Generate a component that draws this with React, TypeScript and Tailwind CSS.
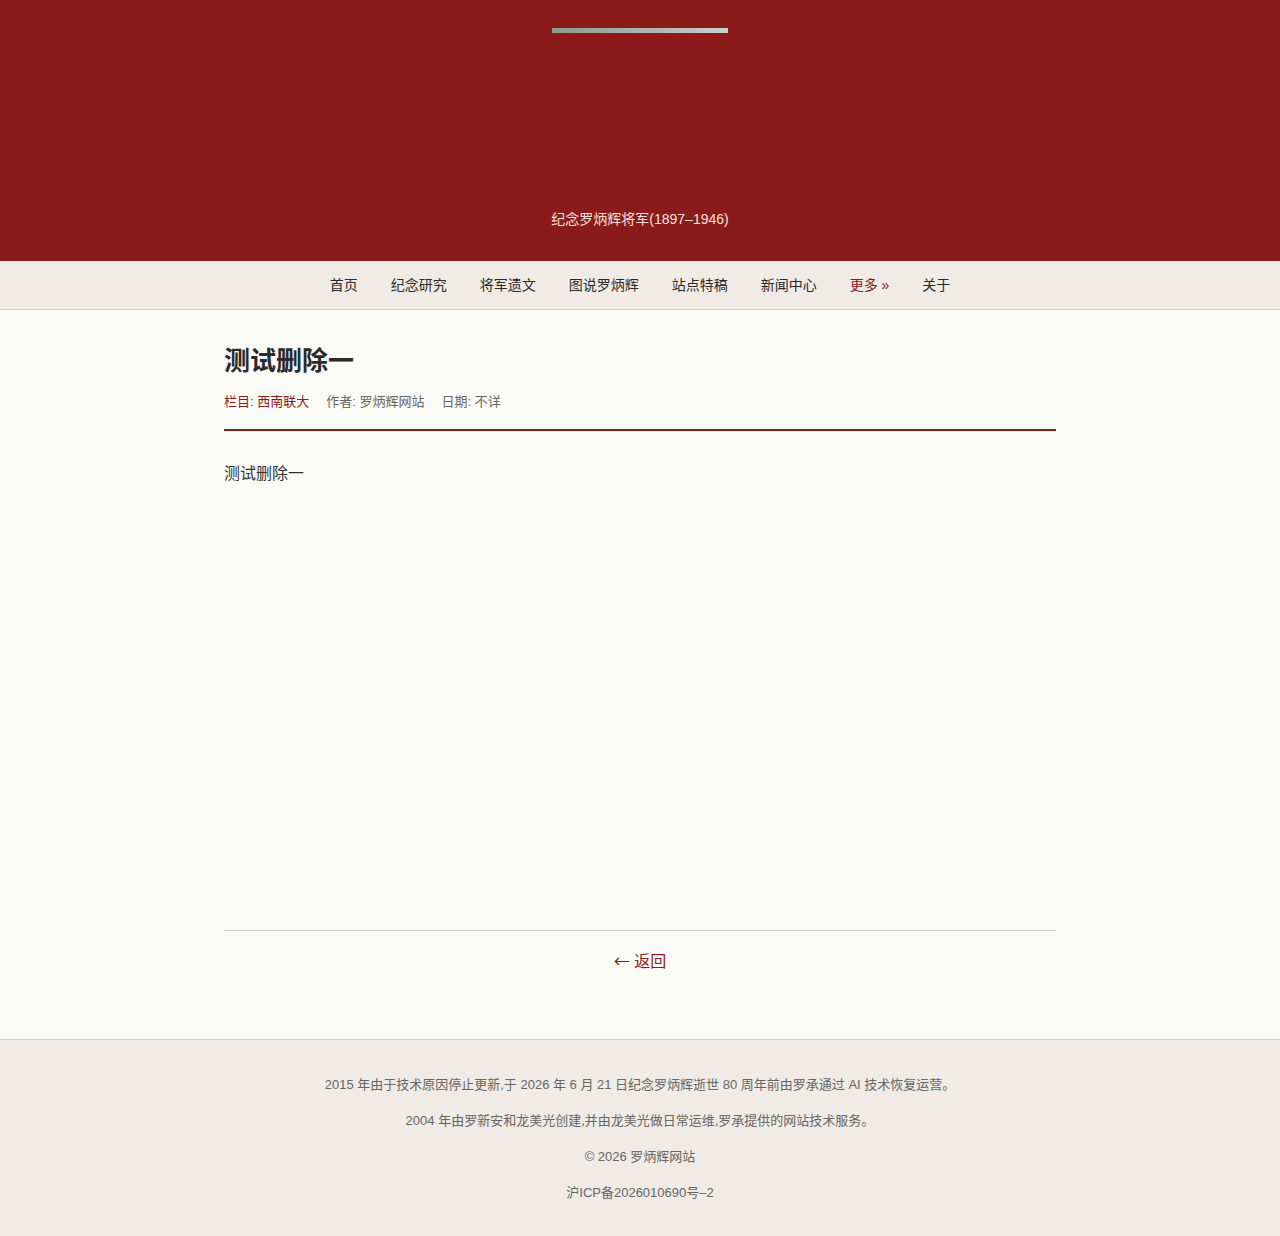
const navItems = ["首页", "纪念研究", "将军遗文", "图说罗炳辉", "站点特稿", "新闻中心"];

const font = "font-['PingFang_SC','Liberation_Sans','Noto_Sans_CJK_SC',sans-serif]";

const App = () => {
  return (
    <div className={`min-h-[1236px] flex flex-col bg-[#fafaf6] text-[#333] ${font}`}>
      {/* site header */}
      <header className="bg-[#8b1a1b] flex flex-col items-center pt-[28px] pb-[32px]">
        <div className="h-[5px] w-[176px] bg-gradient-to-r from-[#8e9a93] via-[#aab3ae] to-[#c9d0d0]" />
        <p className="mt-[176px] text-[14px] leading-5 text-[#f3e1dc]">纪念罗炳辉将军(1897–1946)</p>
      </header>

      <nav className="bg-[#f0ebe4] border-b border-[#d8d3c8] h-[49px] flex items-center justify-center gap-[33px] text-[14px] text-[#2a2a2a]">
        {navItems.map((item) => (
          <a key={item} href="#" className="hover:text-[#8b1a1b]">
            {item}
          </a>
        ))}
        <a href="#" className="text-[#8b1a1b]">
          更多 »
        </a>
        <a href="#">关于</a>
      </nav>

      <main className="flex-1 w-[832px] mx-auto pt-[35px]">
        <article>
          <div className="border-b-2 border-[#8b1a1b] pb-[17px]">
            <h1 className="text-[26px] leading-[32px] font-bold text-[#2a2a2a]">测试删除一</h1>
            <div className="mt-[15px] flex gap-[17px] text-[13px] leading-5 text-[#666]">
              <span className="text-[#8b1a1b]">栏目: 西南联大</span>
              <span>作者: 罗炳辉网站</span>
              <span>日期: 不详</span>
            </div>
          </div>
          <div className="pt-[31px] min-h-[499px] text-[16px] leading-6">
            <p>测试删除一</p>
          </div>
        </article>
        <div className="border-t border-[#d8d3c8] pt-[17px] pb-[65px] text-center">
          <a href="#" className="text-[16px] leading-6 text-[#8b1a1b]">
            <span className="font-['Noto_Sans_CJK_SC',sans-serif]">←</span> 返回
          </a>
        </div>
      </main>

      <footer className="bg-[#f0ebe4] border-t border-[#d8d3c8] pt-[35px] pb-[33px] flex flex-col items-center gap-4 text-[13px] leading-5 text-[#666]">
        <p>2015 年由于技术原因停止更新,于 2026 年 6 月 21 日纪念罗炳辉逝世 80 周年前由罗承通过 AI 技术恢复运营。</p>
        <p>2004 年由罗新安和龙美光创建,并由龙美光做日常运维,罗承提供的网站技术服务。</p>
        <p>© 2026 罗炳辉网站</p>
        <p>沪ICP备2026010690号–2</p>
      </footer>
    </div>
  );
};

export default App;
